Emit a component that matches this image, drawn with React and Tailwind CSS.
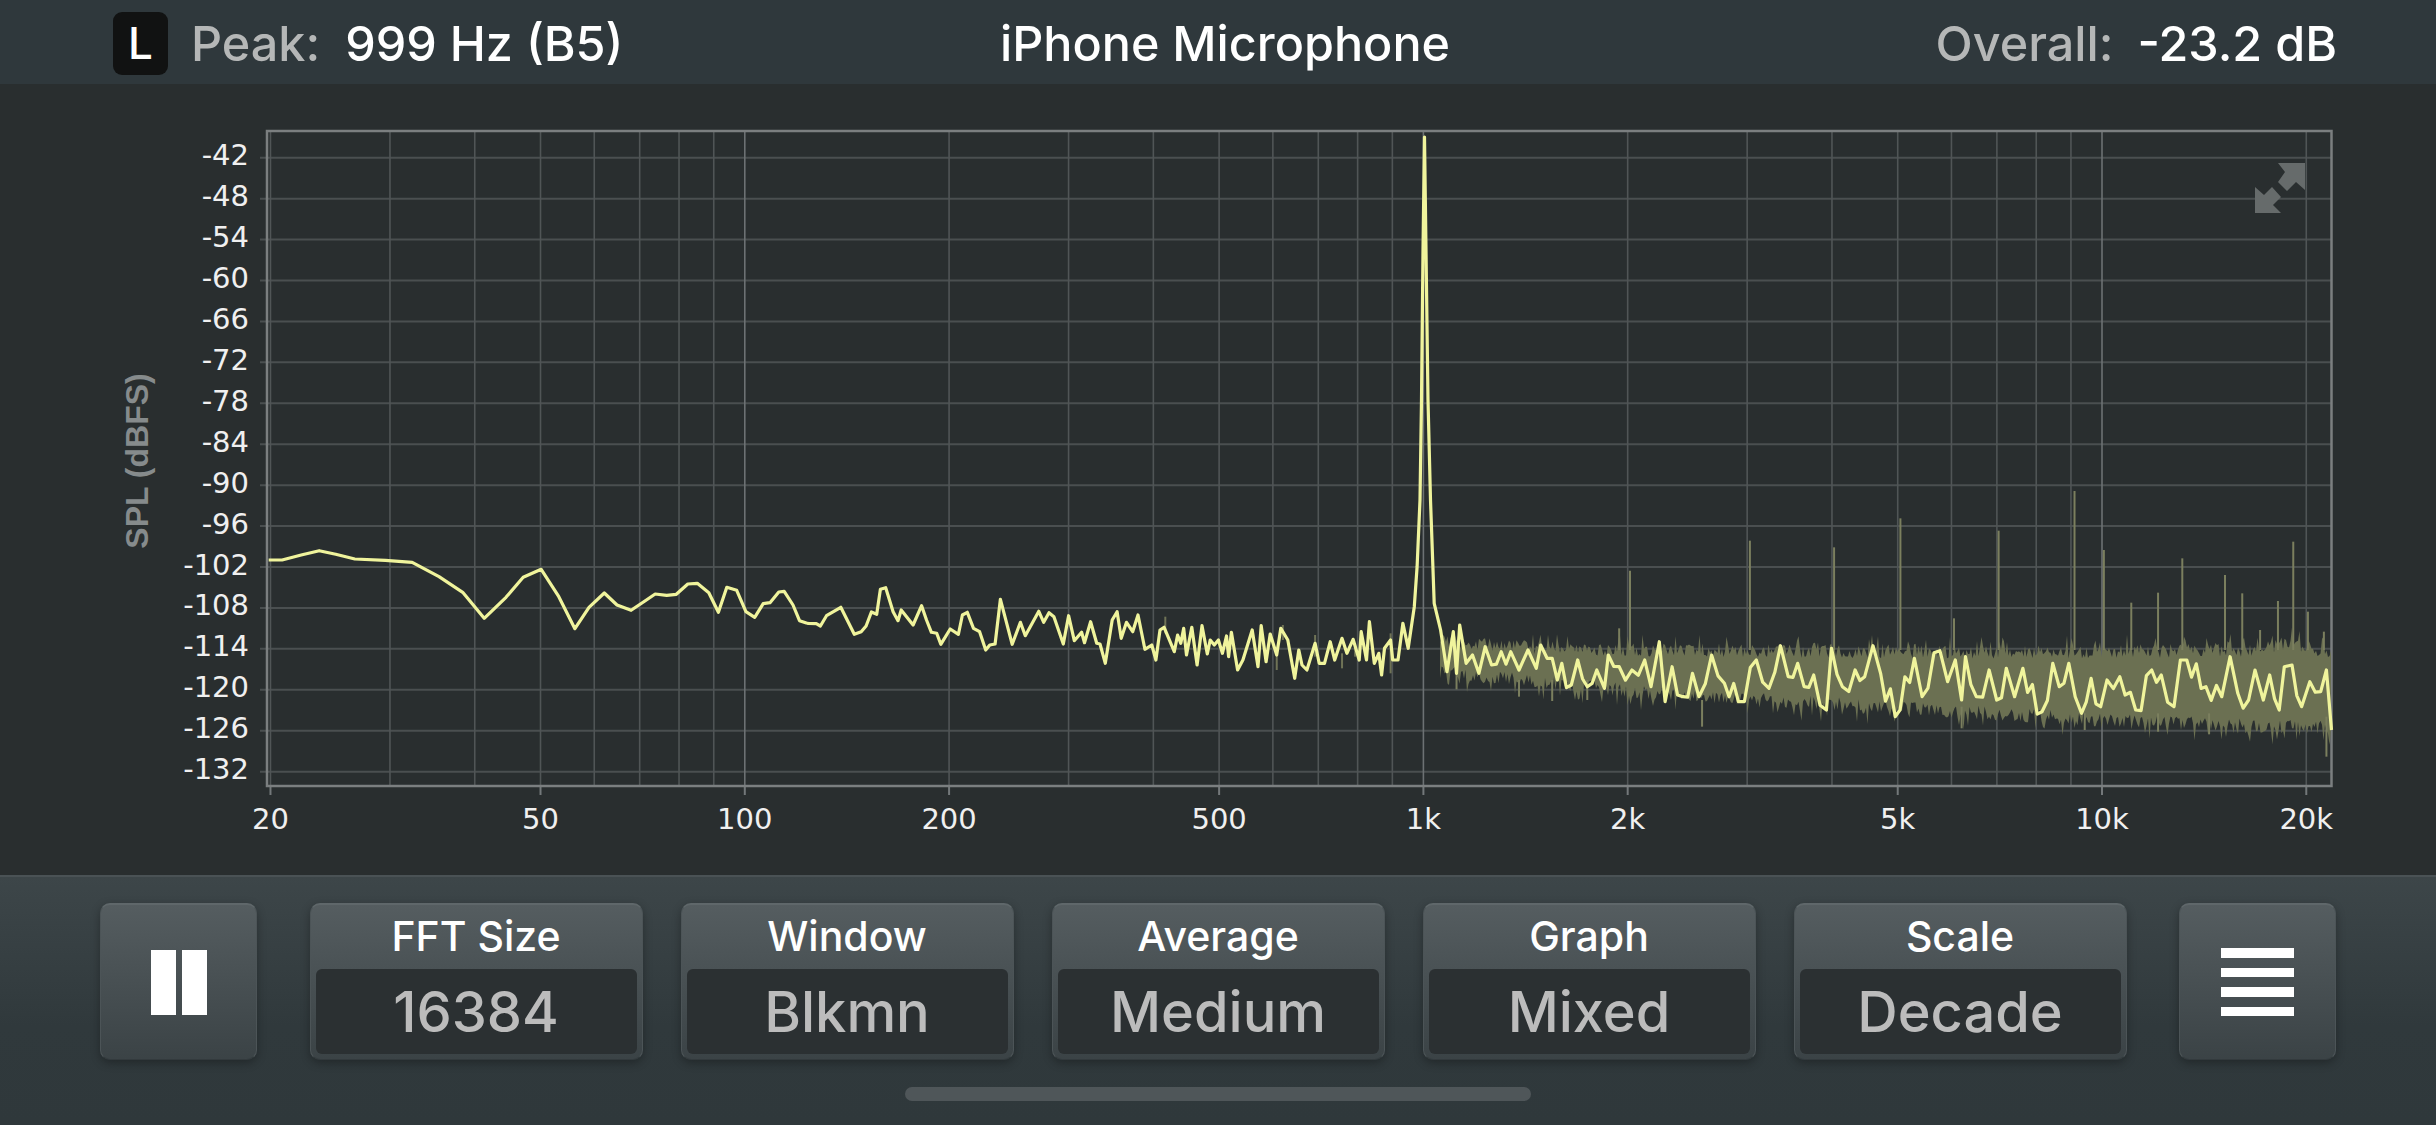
const sans = "font-['Inter','Liberation_Sans',sans-serif]";

const yLabels = [-42, -48, -54, -60, -66, -72, -78, -84, -90, -96, -102, -108, -114, -120, -126, -132];
const xLabels = [
  [20, "20"], [50, "50"], [100, "100"], [200, "200"], [500, "500"],
  [1000, "1k"], [2000, "2k"], [5000, "5k"], [10000, "10k"], [20000, "20k"],
];
const gridFreqs = [];
[10, 100, 1000, 10000].forEach((d) => {
  for (let i = 1; i < 10; i++) {
    const f = d * i;
    if (f >= 20 && f <= 20000) gridFreqs.push(f);
  }
});

const freqX = (f) => 1423.4 + 678.6 * Math.log10(f / 1000);
const dbY = (i) => 157.7 + i * 40.93;

let seed = 12345;
const rnd = () => {
  seed = (seed * 16807) % 2147483647;
  return seed / 2147483647;
};

// traced from the crops, in crop coordinates
const low = [75,180,110,180,160,165,207,152,250,163,300,177,380,181,450,187,520,230,582,277,638,355,695,292,740,232,787,208,833,290,875,386,912,322,952,279,985,315,1022,331,1055,305,1085,282,1115,286,1140,283,1170,252,1195,250,1225,278,1250,337,1272,262,1298,271,1322,335,1345,352,1367,311,1385,308,1408,276,1422,274,1445,315,1462,362,1480,369];
const mid = [20,370,40,371,50,378,65,347,100,322,133,403,150,395,162,378,175,336,188,343,197,268,210,263,228,335,240,362,248,330,277,375,298,317,310,360,322,397,335,400,345,433,368,387,388,403,398,345,410,337,425,385,440,395,455,450,465,435,478,432,491,298,520,433,540,367,552,407,585,334,597,367,610,338,622,350,645,432,658,347,672,422,690,397,697,428,712,365,727,430,735,432,748,490,765,360,777,335,787,415,800,367,815,395,828,345,845,448,862,435,872,480,882,390,892,382,917,455,925,405,933,430,940,385,947,465,960,382,973,495,985,377,998,462,1005,420,1015,435,1025,420,1035,460,1045,408,1050,470,1057,397,1072,510,1085,480,1097,433,1108,390,1122,500,1130,377,1142,485,1152,402,1168,465,1178,385,1195,420,1212,535,1222,450,1230,495,1242,510,1262,430,1272,490,1285,490,1299,425,1310,480,1328,415,1340,460,1355,418,1370,480,1375,395,1388,480,1395,365,1407,490,1418,460,1425,525,1432,445,1447,420,1452,480,1465,480,1477,370,1490,445,1505,320,1512,200];
const high = [85,310,95,390,105,515,115,395,120,520,125,375,135,490,145,465,155,520,165,440,175,495,190,455,205,455,218,510,232,450,245,505,252,435,262,475,270,475,278,540,285,490,300,555,310,480,325,560,340,510,352,565,358,465,375,500,395,510,415,480,425,560,438,425,447,605,458,500,475,590,490,520,500,590,520,465,540,550,562,605,590,480,610,565,628,437,640,530,655,490,665,560,680,525,700,630,708,445,725,560,745,510,760,530,773,437,785,520,808,650,838,475,850,590,878,452,890,545,902,480,912,600,918,470,935,590,955,510,967,600,982,505,995,590,1008,505,1038,635,1055,490,1065,560,1080,490,1090,590,1100,640,1115,535,1130,620,1140,540,1160,530,1185,630,1210,510,1225,525,1245,620,1255,480,1265,480,1295,560,1320,590,1333,470,1345,580,1362,600,1372,510,1385,600,1395,525,1410,630,1418,500,1430,495,1445,620,1458,545,1475,575,1484,510,1492,690];

const mapPts = (arr, x0, sx) => {
  const out = [];
  for (let i = 0; i < arr.length; i += 2) out.push([x0 + arr[i] / sx, 500 + arr[i + 1] / 3]);
  return out;
};

// the traced points miss the finest wiggles, put some back between them
const addWiggle = (pts) => {
  const out = [];
  pts.forEach((p, i) => {
    out.push(p);
    const q = pts[i + 1];
    if (!q || q[0] - p[0] < 9) return;
    const n = Math.floor((q[0] - p[0]) / 4.5);
    for (let k = 1; k < n; k++) {
      const t = k / n;
      const off = (k % 2 ? 1 : -1) * (5 + rnd() * 9);
      out.push([p[0] + (q[0] - p[0]) * t, p[1] + (q[1] - p[1]) * t + off]);
    }
  });
  return out;
};

const trace = [
  ...mapPts(low, 240, 2.613),
  ...mapPts(mid, 800, 2.45),
  [1420, 500], [1421.5, 400], [1423, 250], [1424.5, 137], [1426, 250], [1428, 400], [1430.5, 500],
  ...addWiggle(mapPts(high, 1380, 1.568)),
];
const tracePoints = trace.map((p) => p[0].toFixed(1) + "," + p[1].toFixed(1)).join(" ");

// noise band behind the trace (peak hold)
const lerp = (table, v) => {
  for (let i = 0; i < table.length - 1; i++) {
    if (v <= table[i + 1][0]) {
      const t = (v - table[i][0]) / (table[i + 1][0] - table[i][0]);
      return table[i][1] + t * (table[i + 1][1] - table[i][1]);
    }
  }
  return table[table.length - 1][1];
};
const topEnv = [[1440, 642], [1500, 648], [1640, 652], [2000, 654], [2260, 652], [2290, 644], [2331, 657]];
const botEnv = [[1440, 672], [1640, 692], [1900, 708], [2100, 720], [2331, 728]];
const bandTop = [];
const bandBot = [];
for (let x = 1440; x <= 2331; x += 1.5) {
  const sT = rnd() > 0.85 ? 10 : 0;
  const sB = rnd() > 0.85 ? 12 : 0;
  bandTop.push(x + "," + (lerp(topEnv, x) + rnd() * 14 - 9 - sT).toFixed(1));
  bandBot.unshift(x + "," + (lerp(botEnv, x) + rnd() * 14 - 7 + sB).toFixed(1));
}
const bandPoints = [...bandTop, ...bandBot].join(" ");

// harmonics and stray bins: [crop x, top, bottom]
const spikes = [[392,212,450],[580,122,450],[712,142,450],[816,55,450],[970,92,450],[1089,-27,450],[1135,150,450],[1178,308,450],[1220,278,450],[1258,175,450],[1325,225,450],[1352,280,450],[1408,303,450],[1432,125,450],[1455,335,450],[1480,395,450],[900,355,450],[375,385,450],[1380,390,450],[505,600,680],[1484,650,770],[1300,640,703],[120,500,568],[218,540,590],[270,540,603],[325,540,600],[912,620,685],[1105,640,690],[1220,640,695]];
const midSpikes = [[1168,440,510],[1262,405,470],[1328,460,505],[1183,375,420],[1447,400,520],[895,350,400],[1360,430,470]];

function Chart() {
  return (
    <svg viewBox="0 84 2436 791" className="block w-full h-full">
      {yLabels.map((v, i) => (
        <g key={v}>
          <line x1="260" x2="2331" y1={dbY(i)} y2={dbY(i)} stroke="#4a4f50" strokeWidth="2" />
          <text x="249" y={dbY(i) + 7.5} textAnchor="end" fill="#f0f0f0" fontSize="29" fontFamily="DejaVu Sans, sans-serif">
            {v}
          </text>
        </g>
      ))}
      {gridFreqs.map((f) => {
        const major = f === 100 || f === 1000 || f === 10000;
        return (
          <line key={f} x1={freqX(f)} x2={freqX(f)} y1="131" y2="786" stroke={major ? "#6c7173" : "#505556"} strokeWidth="1.6" />
        );
      })}
      {xLabels.map(([f, t]) => (
        <g key={t}>
          <line x1={freqX(f)} x2={freqX(f)} y1="786" y2="795" stroke="#73787a" strokeWidth="2" />
          <text x={freqX(f)} y="829" textAnchor="middle" fill="#f0f0f0" fontSize="29" fontFamily="DejaVu Sans, sans-serif">
            {t}
          </text>
        </g>
      ))}
      <rect x="267" y="131" width="2064.5" height="655" fill="none" stroke="#7b7f80" strokeWidth="2.5" />
      <text
        transform="translate(148 461) rotate(-90)"
        textAnchor="middle"
        fill="#868b8c"
        fontSize="32"
        fontWeight="700"
        fontFamily="Liberation Sans, sans-serif"
      >
        SPL (dBFS)
      </text>

      <g fill="#666b6b">
        <polygon points="2305,163 2278,163 2285,172 2278,182 2287,191 2296,182 2305,190" />
        <polygon points="2255,213 2255,187 2264,195 2272,187 2281,197 2273,205 2281,213" />
      </g>

      <polygon points={bandPoints} fill="#6b7052" />
      {spikes.map(([x, a, b], i) => (
        <line key={i} x1={1380 + x / 1.568} x2={1380 + x / 1.568} y1={500 + a / 3} y2={500 + b / 3} stroke="#7b7f5e" strokeWidth="2" />
      ))}
      {midSpikes.map(([x, a, b], i) => (
        <line key={i} x1={800 + x / 2.45} x2={800 + x / 2.45} y1={500 + a / 3} y2={500 + b / 3} stroke="#6f7356" strokeWidth="2" />
      ))}
      <polyline points={tracePoints} fill="none" stroke="#f0f49c" strokeWidth="3.2" strokeLinejoin="round" />
    </svg>
  );
}

function SelectButton({ label, value }) {
  return (
    <div className="flex flex-col w-[333px] h-[157px] px-[5px] pb-[5px] rounded-[10px] border-t-2 border-x border-b border-t-[#5f676a] border-x-[#4c5457] border-b-[#333a3d] bg-linear-to-b from-[#555d60] to-[#3b4346] shadow-[0_3px_10px_rgba(0,0,0,0.3)]">
      <div className="flex-1 flex items-center justify-center text-white text-[41px] font-medium">
        {label}
      </div>
      <div className="h-[85px] flex items-center justify-center rounded-[6px] bg-[#2b3032] text-[#bcbcbc] text-[56px] font-medium">
        {value}
      </div>
    </div>
  );
}

function IconButton({ children }) {
  return (
    <div className="flex items-center justify-center w-[157px] h-[157px] rounded-[10px] border-t-2 border-x border-b border-t-[#5f676a] border-x-[#4c5457] border-b-[#333a3d] bg-linear-to-b from-[#555d60] to-[#3b4346] shadow-[0_3px_10px_rgba(0,0,0,0.3)]">
      {children}
    </div>
  );
}

export default function App() {
  return (
    <div className={`${sans} w-[2436px] h-[1125px] flex flex-col overflow-hidden bg-[#292e2f]`}>
      <header className="h-[84px] shrink-0 grid grid-cols-[1fr_auto_1fr] items-center pl-[113px] pr-[99px] bg-[#2f383c] text-[48.5px]">
        <div className="flex items-center">
          <div className="w-[55px] h-[63px] mt-[2px] flex items-center justify-center rounded-[9px] bg-[#111212] text-white text-[44px] font-medium">
            L
          </div>
          <span className="ml-[23px] mt-[4px] text-[#b5b7b7] font-medium">Peak:</span>
          <span className="ml-[25px] mt-[4px] text-white font-medium">999 Hz (B5)</span>
        </div>
        <div className="mt-[4px] text-white font-medium">iPhone Microphone</div>
        <div className="mt-[4px] flex items-center justify-end">
          <span className="text-[#b5b7b7] font-medium">Overall:</span>
          <span className="ml-[24px] text-white font-medium">-23.2 dB</span>
        </div>
      </header>

      <main className="h-[791px] shrink-0">
        <Chart />
      </main>

      <footer className="flex-1 flex flex-col border-t-2 border-[#4a5255] bg-linear-to-b from-[#3d4649] via-[#30393c] via-60% to-[#2f383b]">
        <div className="flex justify-between px-[100px] pt-[26px]">
          <IconButton>
            <div className="flex gap-[6px]">
              <div className="w-[25px] h-[65px] bg-white" />
              <div className="w-[25px] h-[65px] bg-white" />
            </div>
          </IconButton>
          <div className="flex gap-[38px]">
            <SelectButton label="FFT Size" value="16384" />
            <SelectButton label="Window" value="Blkmn" />
            <SelectButton label="Average" value="Medium" />
            <SelectButton label="Graph" value="Mixed" />
            <SelectButton label="Scale" value="Decade" />
          </div>
          <IconButton>
            <div className="flex flex-col gap-[10px]">
              <div className="w-[73px] h-[9.5px] bg-white" />
              <div className="w-[73px] h-[9.5px] bg-white" />
              <div className="w-[73px] h-[9.5px] bg-white" />
              <div className="w-[73px] h-[9.5px] bg-white" />
            </div>
          </IconButton>
        </div>
        <div className="mt-[27px] mx-auto w-[626px] h-[14px] rounded-full bg-[#4f5659]" />
      </footer>
    </div>
  );
}
